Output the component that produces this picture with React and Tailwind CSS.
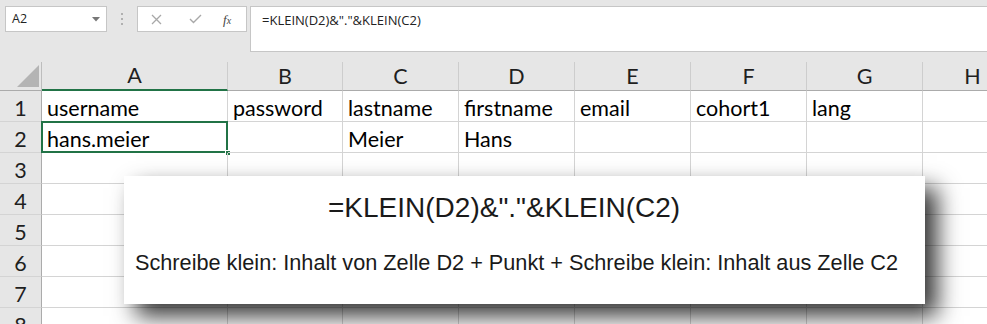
import React from "react";

const cols = [
  { l: "A", w: "w-[186px]" },
  { l: "B", w: "w-[115px]" },
  { l: "C", w: "w-[116px]" },
  { l: "D", w: "w-[116px]" },
  { l: "E", w: "w-[116px]" },
  { l: "F", w: "w-[116px]" },
  { l: "G", w: "w-[116px]" },
  { l: "H", w: "w-[100px]" },
];

const data = {
  1: ["username", "password", "lastname", "firstname", "email", "cohort1", "lang", ""],
  2: ["hans.meier", "", "Meier", "Hans", "", "", "", ""],
};

const cellFont = "font-['Lato','Noto_Sans',sans-serif] text-[21.5px]";

export default function App() {
  const rows = [1, 2, 3, 4, 5, 6, 7, 8];
  return (
    <div className="relative w-[987px] h-[324px] overflow-hidden bg-white">
      {/* Top formula area */}
      <div className="flex items-start h-[62px] bg-[#e6e6e6] pt-[6px] pl-[5px] font-['Open_Sans','Noto_Sans',sans-serif]">
        <div className="flex items-center justify-between w-[102px] h-[26px] bg-white border border-[#c6c6c6] pl-[6px] pr-[6px]">
          <span className="text-[12.5px] text-[#222]">A2</span>
          <svg width="8" height="5" viewBox="0 0 8 5"><path d="M0 0 H8 L4 4.5 Z" fill="#777" /></svg>
        </div>
        <div className="flex flex-col items-center justify-center w-[30px] h-[26px] gap-[3px]">
          <span className="w-[2px] h-[2px] bg-[#b0b0b0]" />
          <span className="w-[2px] h-[2px] bg-[#b0b0b0]" />
          <span className="w-[2px] h-[2px] bg-[#b0b0b0]" />
        </div>
        <div className="flex items-center w-[110px] h-[26px] bg-white border border-[#c6c6c6] pl-[13px]">
          <svg width="11" height="11" viewBox="0 0 11 11"><path d="M1 1 L10 10 M10 1 L1 10" stroke="#a8a8a8" strokeWidth="1.3" fill="none" /></svg>
          <svg className="ml-[27px]" width="13" height="10" viewBox="0 0 13 10"><path d="M1 5 L4.5 8.5 L12 1" stroke="#a8a8a8" strokeWidth="1.4" fill="none" /></svg>
          <span className="ml-[21px] font-['Liberation_Serif',serif] italic text-[13px] text-[#444] leading-none">f<span className="text-[10px]">x</span></span>
        </div>
        <div className="ml-[3px] flex-1 h-[46px] bg-white border-y border-l border-[#c6c6c6] pl-[11px] pt-[2px] leading-[20px]">
          <span className="text-[13px] text-[#222]">=KLEIN(D2)&amp;"."&amp;KLEIN(C2)</span>
        </div>
      </div>

      {/* Column headers */}
      <div className={`flex h-[29px] bg-[#e6e6e6] ${cellFont}`}>
        <div className="relative w-[42px] shrink-0 border-r border-[#bdbdbd] border-b border-b-[#ababab]">
          <svg className="absolute left-[17px] top-[3px]" width="22" height="22" viewBox="0 0 22 22"><path d="M22 0 V22 H0 Z" fill="#b4b4b4" /></svg>
        </div>
        {cols.map((c, i) => (
          <div
            key={c.l}
            className={`${c.w} shrink-0 flex items-center justify-center pt-[1px] text-[#1f1f1f] leading-none border-r border-[#cdcdcd] ${i === 0 ? "border-b-2 border-b-[#217346]" : "border-b border-b-[#ababab]"}`}
          >
            {c.l}
          </div>
        ))}
      </div>

      {/* Rows */}
      {rows.map((r) => (
        <div key={r} className={`flex h-[31px] ${cellFont}`}>
          <div className="w-[42px] shrink-0 flex items-center justify-center pt-[5px] bg-[#e6e6e6] border-r border-[#ababab] border-b border-b-[#d4d4d4] text-[#1f1f1f] leading-none">
            {r}
          </div>
          {cols.map((c, i) => (
            <div
              key={c.l}
              className={`relative ${c.w} shrink-0 flex items-center pl-[5px] pt-[5px] border-r border-b border-[#d4d4d4] text-black leading-none whitespace-nowrap`}
            >
              {data[r] ? data[r][i] : ""}
              {r === 2 && i === 0 && (
                <>
                  <div className="absolute -left-[1px] -top-[1px] -right-[1px] -bottom-[1px] border-2 border-[#217346]" />
                  <div className="absolute -right-[4px] -bottom-[4px] w-[6px] h-[6px] bg-[#217346] border border-white" />
                </>
              )}
            </div>
          ))}
        </div>
      ))}

      {/* Overlay explanation box */}
      <div className="absolute left-[124px] top-[176px] w-[801px] h-[128px] bg-white shadow-[12px_12px_22px_rgba(0,0,0,0.8)] font-['Liberation_Sans',Arial,sans-serif] text-[#1a1a1a]">
        <div className="pl-[204px] pt-[18px] text-[28px] leading-none">=KLEIN(D2)&amp;"."&amp;KLEIN(C2)</div>
        <div className="pl-[11px] pt-[30px] text-[21.7px] leading-none whitespace-nowrap">
          Schreibe klein: Inhalt von Zelle D2 + Punkt + Schreibe klein: Inhalt aus Zelle C2
        </div>
      </div>
    </div>
  );
}
